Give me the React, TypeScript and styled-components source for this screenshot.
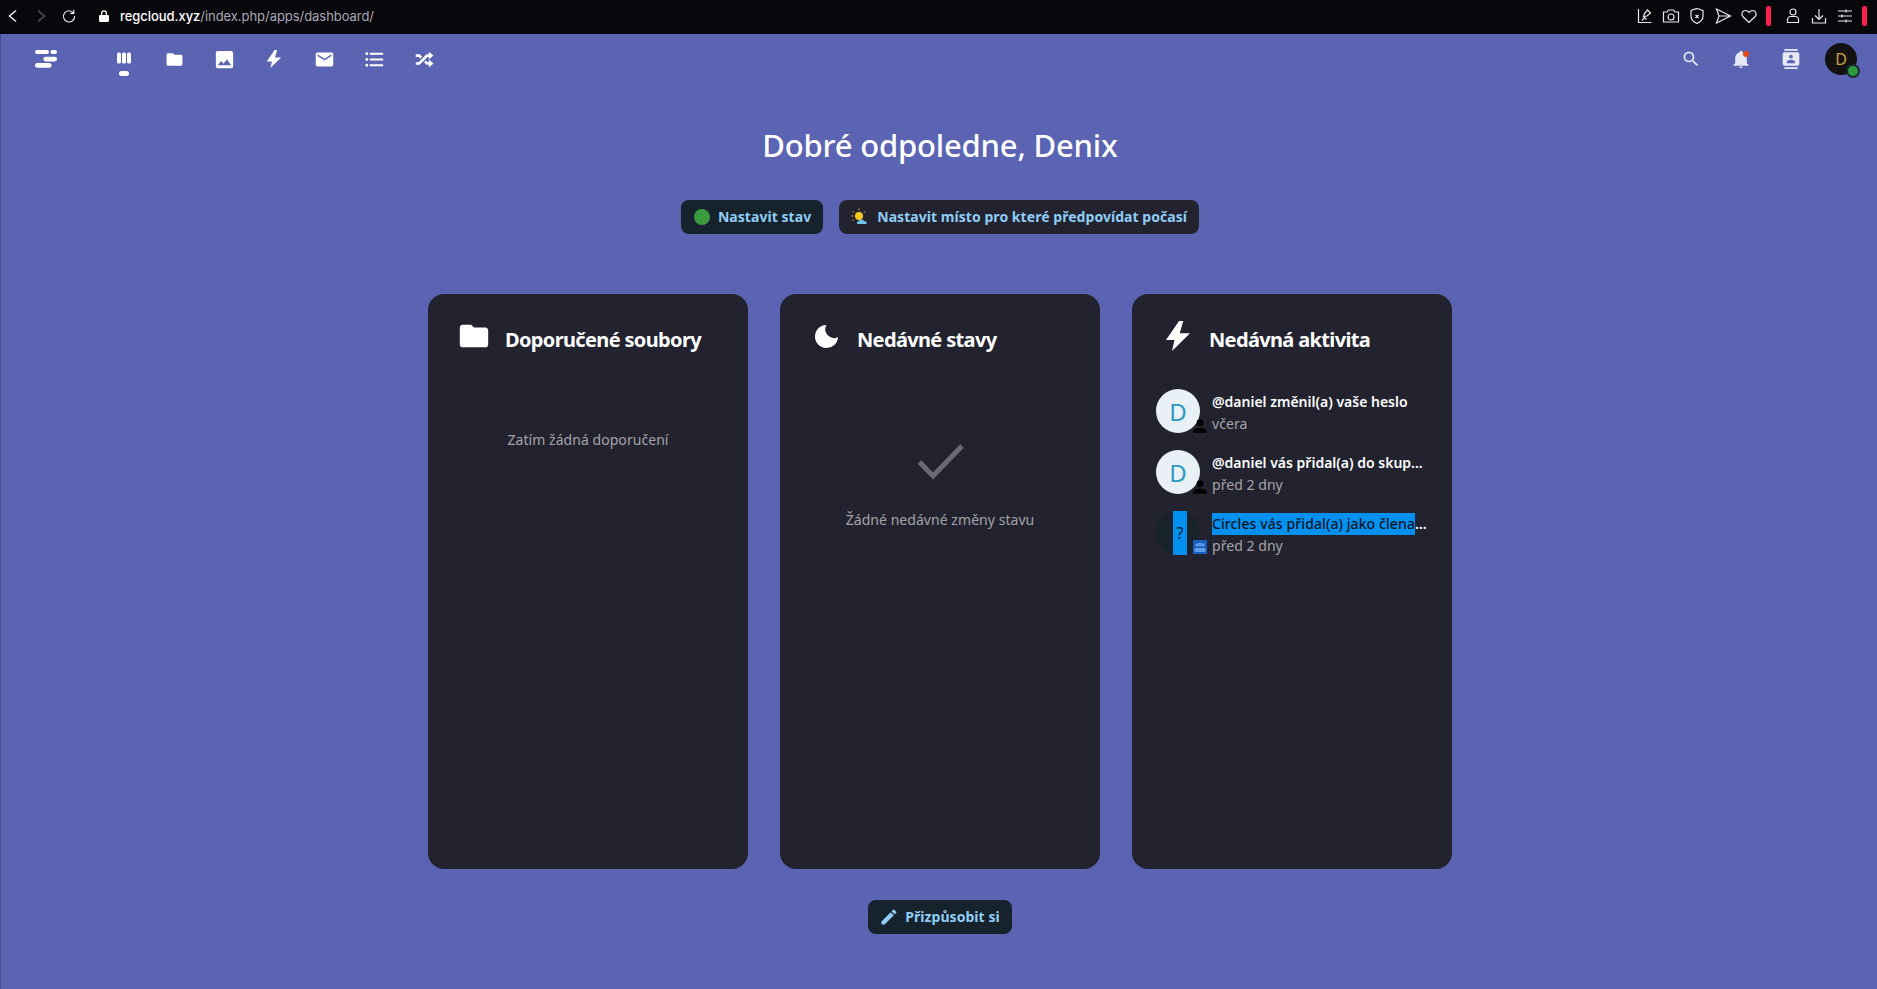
import React from 'react';
import styled, { createGlobalStyle } from 'styled-components';

const Global = createGlobalStyle`
  html, body { margin: 0; padding: 0; height: 100%; background: #5b63b3; overflow: hidden; }
  body { font-family: "Noto Sans", "Open Sans", sans-serif; }
`;
const Page = styled.div`
  width: 1877px; height: 989px; display: flex; flex-direction: column; background: #5b63b3;
  border-left: 1px solid #4a5095; box-sizing: border-box;
`;
const BrowserBar = styled.div`
  height: 34px; flex: none; margin-left: -1px; background: #08070c; display: flex; align-items: center;
  padding: 0 0 2px 5px; box-sizing: border-box; color: #fff;
`;
const NavArrow = styled.svg<{ $dim?: boolean }>`
  width: 16px; height: 16px; flex: none; margin-right: 12px;
  fill: none; stroke: ${p => (p.$dim ? '#55545a' : '#eee')}; stroke-width: 1.5;
`;
const Reload = styled(NavArrow)`
  margin-right: 20px; stroke-width: 1.1;
`;
const Lock = styled.svg`
  width: 14px; height: 14px; fill: #fff; margin-right: 9px; flex: none;
`;
const Url = styled.div`
  font-size: 13px; color: #a8a7b4; flex: 1; white-space: nowrap; font-family: Inter, sans-serif; letter-spacing: -.05px;
  b { color: #fff; font-weight: 500; }
`;
const Tools = styled.div`
  display: flex; align-items: center; gap: 8px; padding-right: 10px;
`;
const ToolIcon = styled.svg`
  width: 18px; height: 18px; fill: none; stroke: #e6e6e6; stroke-width: 1.2; flex: none;
`;
const RedBar = styled.div<{ $after?: number }>`
  width: 5px; height: 20px; border-radius: 2px; background: #ff1f55; flex: none; margin-right: ${p => p.$after ?? 0}px;
`;
const Header = styled.header`
  height: 50px; flex: none; display: flex; align-items: center; justify-content: space-between; position: relative;
`;
const Group = styled.div`
  display: flex; align-items: center;
`;
const Logo = styled.svg`
  width: 22px; height: 18px; fill: #fff; margin: 0 42px 0 34px; flex: none;
`;
const Slot = styled.div<{ $active?: boolean }>`
  width: 50px; height: 50px; display: flex; align-items: center; justify-content: center; position: relative; flex: none;
  ${p => p.$active && `&::after { content: ''; position: absolute; left: 20px; top: 37px; width: 10px; height: 5px; border-radius: 3px; background: #fff; }`}
`;
const Glyph = styled.svg<{ $size?: number; $color?: string }>`
  width: ${p => p.$size ?? 20}px; height: ${p => p.$size ?? 20}px; fill: ${p => p.$color ?? '#fff'}; flex: none; display: block;
`;
const BellDot = styled.span`
  position: absolute; left: 27px; top: 17px; width: 6px; height: 6px; border-radius: 50%; background: #e9491f;
`;
const Avatar = styled.div`
  width: 32px; height: 32px; border-radius: 50%; background: #141210; color: #c9a24e; font-size: 16px;
  display: flex; align-items: center; justify-content: center; position: relative; margin: 0 20px 0 9px; flex: none;
`;
const Online = styled.span`
  position: absolute; right: -3px; bottom: -3px; width: 10px; height: 10px; border-radius: 50%;
  background: #2e9a3f; border: 2px solid #1c2a30;
`;
const Main = styled.main`
  flex: 1; display: flex; flex-direction: column; align-items: center; padding-left: 2px;
`;
const Title = styled.h1`
  margin: 39px 0 0; font-size: 31px; line-height: 44px; font-weight: 500; color: #fff; letter-spacing: -.2px;
`;
const StatusRow = styled.div`
  display: flex; gap: 16px; margin-top: 33px;
`;
const Pill = styled.button<{ $tint?: boolean }>`
  height: 34px; border: 0; border-radius: 8px; padding: 0 12px; display: flex; align-items: center; gap: 8px;
  background: ${p => (p.$tint ? '#16222c' : '#23232f')}; color: #8fcdf6; font: 700 14px/1 "Noto Sans", sans-serif; letter-spacing: .05px;
`;
const StatusDot = styled.span`
  width: 16px; height: 16px; border-radius: 50%; background: #3a9a40; flex: none; margin-left: 1px;
`;
const Panels = styled.div`
  display: flex; gap: 32px; margin-top: 60px;
`;
const Panel = styled.section`
  width: 320px; height: 575px; background: #23232f; border-radius: 16px; box-sizing: border-box; padding: 23px 0 0; display: flex; flex-direction: column;
`;
const PanelHead = styled.div`
  display: flex; align-items: center; height: 44px;
`;
const PanelIcon = styled.div`
  width: 60px; height: 34px; margin: 0 1px 6px 16px; flex: none; display: flex; align-items: center; justify-content: center;
`;
const PanelTitle = styled.h2`
  margin: 0; color: #fff; font-size: 20px; font-weight: 700; letter-spacing: -.65px; white-space: nowrap;
`;
const EmptyText = styled.p<{ $top: number }>`
  margin: ${p => p.$top}px 0 0; text-align: center; color: #a4a4a8; font-size: 14px; letter-spacing: .05px;
`;
const Check = styled.svg`
  width: 48px; height: 48px; margin: 77px auto 0; display: block; fill: none; stroke: #6a6a72; stroke-width: 5;
`;
const List = styled.ul`
  list-style: none; margin: 28px 0 0; padding: 0 24px; display: flex; flex-direction: column; gap: 17px;
`;
const Item = styled.li`
  display: flex; gap: 12px; height: 44px; min-width: 0;
`;
const IconBox = styled.div`
  position: relative; width: 44px; height: 44px; flex: none;
`;
const Circle = styled.div<{ $dark?: boolean }>`
  width: 44px; height: 44px; border-radius: 50%; display: flex; align-items: center; justify-content: center; font-size: 24px;
  background: ${p => (p.$dark ? '#17222b' : '#e9f1f6')}; color: ${p => (p.$dark ? '#10202c' : '#2d9ac2')};
`;
const Unknown = styled.span`
  width: 14px; height: 44px; margin-left: 4px; background: #0090f0; font-size: 16px; display: flex; align-items: center; justify-content: center; color: #10202c;
`;
const PersonBadge = styled.svg`
  position: absolute; right: -10px; bottom: -3px; width: 20px; height: 20px;
`;
const GroupBadge = styled.svg`
  position: absolute; right: -7px; bottom: 1px; width: 14px; height: 14px;
`;
const Texts = styled.div`
  min-width: 0; flex: 1; display: flex; flex-direction: column; padding-top: 2px;
`;
const Subject = styled.div<{ $plain?: boolean }>`
  flex: none; font-size: 14px; line-height: 22px; color: #fff; font-weight: 600; white-space: nowrap;
  mark { background: #0090f0; color: #06141f; display: inline-block; font-weight: 500; letter-spacing: .1px; }
`;
const When = styled.div`
  flex: none; font-size: 14px; line-height: 22px; color: #a4a4a8; letter-spacing: .05px;
`;
const Customize = styled(Pill)`
  margin-top: 31px; gap: 6px; padding-left: 11px;
`;

const d = {
  folder: 'M10,4H4C2.89,4 2,4.89 2,6V18A2,2 0 0,0 4,20H20A2,2 0 0,0 22,18V8C22,6.89 21.1,6 20,6H12L10,4Z',
  image: 'M8.5,13.5L11,16.5L14.5,12L19,18H5M21,19V5C21,3.89 20.1,3 19,3H5A2,2 0 0,0 3,5V19A2,2 0 0,0 5,21H19A2,2 0 0,0 21,19Z',
  bolt: 'M13 0L0 19H8.500L6 30L24 12.300H13.700L17.300 0Z',
  mail: 'M20,8L12,13L4,8V6L12,11L20,6M20,4H4C2.89,4 2,4.89 2,6V18A2,2 0 0,0 4,20H20A2,2 0 0,0 22,18V6C22,4.89 21.1,4 20,4Z',
  list: 'M7,5H21V7H7V5M7,13V11H21V13H7M4,4.5A1.5,1.5 0 0,1 5.5,6A1.5,1.5 0 0,1 4,7.5A1.5,1.5 0 0,1 2.5,6A1.5,1.5 0 0,1 4,4.5M4,10.5A1.5,1.5 0 0,1 5.5,12A1.5,1.5 0 0,1 4,13.5A1.5,1.5 0 0,1 2.5,12A1.5,1.5 0 0,1 4,10.5M7,19V17H21V19H7M4,16.5A1.5,1.5 0 0,1 5.5,18A1.5,1.5 0 0,1 4,19.5A1.5,1.5 0 0,1 2.5,18A1.5,1.5 0 0,1 4,16.5Z',
  shuffle: 'M17,3L22.25,7.5L17,12L22.25,16.5L17,21V18H14.26L11.44,15.18L13.56,13.06L15.5,15H17V12L17,9H15.5L6.5,18H2V15H5.26L14.26,6H17V3M2,6H6.5L9.32,8.82L7.2,10.94L5.26,9H2V6Z',
  search: 'M9.5,3A6.5,6.5 0 0,1 16,9.5C16,11.11 15.41,12.59 14.44,13.73L14.71,14H15.5L20.5,19L19,20.5L14,15.5V14.71L13.73,14.44C12.59,15.41 11.11,16 9.5,16A6.5,6.5 0 0,1 3,9.5A6.5,6.5 0 0,1 9.5,3M9.5,5C7,5 5,7 5,9.5C5,12 7,14 9.5,14C12,14 14,12 14,9.5C14,7 12,5 9.5,5Z',
  bell: 'M21,19V20H3V19L5,17V11C5,7.9 7.03,5.17 10,4.29C10,4.19 10,4.1 10,4A2,2 0 0,1 12,2A2,2 0 0,1 14,4C14,4.1 14,4.19 14,4.29C16.97,5.17 19,7.9 19,11V17L21,19M14,21A2,2 0 0,1 12,23A2,2 0 0,1 10,21',
  contacts: 'M20,0H4V2H20V0M4,24H20V22H4V24M20,4H4A2,2 0 0,0 2,6V18A2,2 0 0,0 4,20H20A2,2 0 0,0 22,18V6A2,2 0 0,0 20,4M12,6.75A2.25,2.25 0 0,1 14.25,9A2.25,2.25 0 0,1 12,11.25A2.25,2.25 0 0,1 9.75,9A2.25,2.25 0 0,1 12,6.75M17,17H7V15.5C7,13.83 10.33,13 12,13C13.67,13 17,13.83 17,15.5V17Z',
  pencil: 'M20.71,7.04C21.1,6.65 21.1,6 20.71,5.63L18.37,3.29C18,2.9 17.35,2.9 16.96,3.29L15.12,5.12L18.87,8.87M3,17.25V21H6.75L17.81,9.93L14.06,6.18L3,17.25Z',
  moon: 'M12 0A12 12 0 1 0 24 12.500 9 9 0 0 1 12 0z',
  user: 'M12,4A4,4 0 0,1 16,8A4,4 0 0,1 12,12A4,4 0 0,1 8,8A4,4 0 0,1 12,4M12,14C16.42,14 20,15.79 20,18V20H4V18C4,15.79 7.58,14 12,14Z',
};

const Icon = ({ path, size, color, box = '0 0 24 24' }: { path: string; size?: number; color?: string; box?: string }) => (
  <Glyph viewBox={box} $size={size} $color={color}><path d={path} /></Glyph>
);

const BOLT_BOX = '-3 0 30 30';

export default function App() {
  return (
    <Page>
      <Global />
      <BrowserBar>
        <NavArrow viewBox="0 0 16 16"><path d="M11 2.500 4.500 8 11 13.500" /></NavArrow>
        <NavArrow viewBox="0 0 16 16" $dim><path d="M5 2.500 11.500 8 5 13.500" /></NavArrow>
        <Reload viewBox="0 0 16 16"><path d="M12.600 5.200A5.600 5.600 0 1 0 13.600 8M12.800 1.800v3.600H9.200" /></Reload>
        <Lock viewBox="0 0 14 14"><path d="M4 6V4.200a3 3 0 0 1 6 0V6h.8c.7 0 1.200.5 1.200 1.200v4.600c0 .7-.5 1.200-1.200 1.200H3.200C2.500 13 2 12.500 2 11.800V7.200C2 6.500 2.500 6 3.200 6zM5.300 6h3.400V4.200a1.700 1.700 0 0 0-3.400 0z" /></Lock>
        <Url><b>regcloud.xyz</b>/index.php/apps/dashboard/</Url>
        <Tools>
          <ToolIcon viewBox="0 0 18 18"><path d="M2.500 2v13.500h13M7.500 9.500l1-3 3-3.500 3 3-3.500 3zM7.500 9.500l3 3M8.500 10.500l-2.500 3" /></ToolIcon>
          <ToolIcon viewBox="0 0 18 18"><path d="M1.500 5h3.500l1.500-2h5L13 5h3.500v10h-15z" /><circle cx="9" cy="10" r="3" /></ToolIcon>
          <ToolIcon viewBox="0 0 18 18"><path d="M9 1.500l6 2v6c0 3.500-3 5.500-6 7-3-1.500-6-3.500-6-7v-6zM7.500 8l3 3M10.500 8l-3 3" /></ToolIcon>
          <ToolIcon viewBox="0 0 18 18"><path d="M2.500 2l14 7-14 7 2.500-7zM5 9h11.500" /></ToolIcon>
          <ToolIcon viewBox="0 0 18 18"><path d="M9 15.500 2.800 9.500C.8 7 2.500 3.500 5.500 3.500 7 3.500 8.300 4.300 9 5.500c.7-1.200 2-2 3.500-2 3 0 4.700 3.500 2.700 6z" /></ToolIcon>
          <RedBar $after={5} />
          <ToolIcon viewBox="0 0 18 18"><circle cx="9" cy="5" r="3" /><path d="M3.500 15.500v-3c0-1.500 1.500-3 3-3h5c1.500 0 3 1.500 3 3v3z" /></ToolIcon>
          <ToolIcon viewBox="0 0 18 18"><path d="M9 2v10M5 8.500l4 4 4-4M2.500 11v5h13v-5" /></ToolIcon>
          <ToolIcon viewBox="0 0 18 18"><path d="M2 4h14M2 9h14M2 14h14M10 2.500v3M6 7.500v3M10 12.500v3" /></ToolIcon>
          <RedBar />
        </Tools>
      </BrowserBar>
      <Header>
        <Group>
          <Logo viewBox="0 0 22 18">
            <rect x="0" y="0" width="14" height="4" rx="2" />
            <rect x="15.500" y="0" width="6.500" height="4" rx="2" />
            <rect x="8.300" y="6.700" width="13.700" height="4.700" rx="2.300" />
            <rect x="0" y="13" width="16.500" height="4.800" rx="2.400" />
          </Logo>
          <Slot $active>
            <Glyph viewBox="0 0 20 20" $size={20}>
              <rect x="3" y="3.500" width="4" height="11" rx="1.500" />
              <rect x="8" y="3.500" width="4" height="11" rx="1.500" />
              <rect x="13" y="3.500" width="4" height="11" rx="1.500" />
            </Glyph>
          </Slot>
          <Slot><Icon path={d.folder} size={19} /></Slot>
          <Slot><Icon path={d.image} size={23} /></Slot>
          <Slot><Icon path={d.bolt} box={BOLT_BOX} size={18} /></Slot>
          <Slot><Icon path={d.mail} size={21} /></Slot>
          <Slot><Icon path={d.list} size={23} /></Slot>
          <Slot><Icon path={d.shuffle} size={21} /></Slot>
        </Group>
        <Group>
          <Slot><Icon path={d.search} size={20} color="#e6e8f6" /></Slot>
          <Slot><Icon path={d.bell} size={20} color="#e6e8f6" /><BellDot /></Slot>
          <Slot><Icon path={d.contacts} size={20} color="#e6e8f6" /></Slot>
          <Avatar>D<Online /></Avatar>
        </Group>
      </Header>
      <Main>
        <Title>Dobré odpoledne, Denix</Title>
        <StatusRow>
          <Pill $tint><StatusDot />Nastavit stav</Pill>
          <Pill>
            <svg width="18" height="18" viewBox="0 0 18 18">
              <circle cx="8" cy="8" r="4" fill="#f2c81e" />
              <path d="M8 .5v2M8 13.500v2M.5 8h2M1.500 3l1.500 1.500M14.500 3 13 4.500M1.500 13 3 11.500" stroke="#c9a94a" strokeWidth="1" />
              <path d="M7 16c-1.500 0-1.500-2.500.5-2.500C8 11 12 11 13 13c2.500-.5 4 3 1.500 3z" fill="#6fc3ea" />
            </svg>
            Nastavit místo pro které předpovídat počasí
          </Pill>
        </StatusRow>
        <Panels>
          <Panel>
            <PanelHead>
              <PanelIcon><Icon path={d.folder} size={34} /></PanelIcon>
              <PanelTitle>Doporučené soubory</PanelTitle>
            </PanelHead>
            <EmptyText $top={69}>Zatím žádná doporučení</EmptyText>
          </Panel>
          <Panel>
            <PanelHead>
              <PanelIcon><Icon path={d.moon} size={23} /></PanelIcon>
              <PanelTitle>Nedávné stavy</PanelTitle>
            </PanelHead>
            <Check viewBox="0 0 48 48"><path d="M3.500 24 17 38 46 8" /></Check>
            <EmptyText $top={24}>Žádné nedávné změny stavu</EmptyText>
          </Panel>
          <Panel>
            <PanelHead>
              <PanelIcon><Icon path={d.bolt} box={BOLT_BOX} size={30} /></PanelIcon>
              <PanelTitle>Nedávná aktivita</PanelTitle>
            </PanelHead>
            <List>
              <Item>
                <IconBox>
                  <Circle>D</Circle>
                  <PersonBadge viewBox="0 0 24 24"><path d={d.user} fill="#000" /></PersonBadge>
                </IconBox>
                <Texts>
                  <Subject>@daniel změnil(a) vaše heslo</Subject>
                  <When>včera</When>
                </Texts>
              </Item>
              <Item>
                <IconBox>
                  <Circle>D</Circle>
                  <PersonBadge viewBox="0 0 24 24"><path d={d.user} fill="#000" /></PersonBadge>
                </IconBox>
                <Texts>
                  <Subject>@daniel vás přidal(a) do skup…</Subject>
                  <When>před 2 dny</When>
                </Texts>
              </Item>
              <Item>
                <IconBox>
                  <Circle $dark><Unknown>?</Unknown></Circle>
                  <GroupBadge viewBox="0 0 14 14">
                    <rect width="14" height="14" fill="#1a5fc0" />
                    <circle cx="4" cy="5" r="1.700" fill="#5b9be8" />
                    <circle cx="7" cy="4.500" r="1.900" fill="#5b9be8" />
                    <circle cx="10" cy="5" r="1.700" fill="#5b9be8" />
                    <rect x="1.500" y="8" width="11" height="4" rx="1" fill="#5b9be8" />
                  </GroupBadge>
                </IconBox>
                <Texts>
                  <Subject><mark>Circles vás přidal(a) jako člena</mark>…</Subject>
                  <When>před 2 dny</When>
                </Texts>
              </Item>
            </List>
          </Panel>
        </Panels>
        <Customize $tint><Icon path={d.pencil} size={20} color="#8fcdf6" />Přizpůsobit si</Customize>
      </Main>
    </Page>
  );
}
